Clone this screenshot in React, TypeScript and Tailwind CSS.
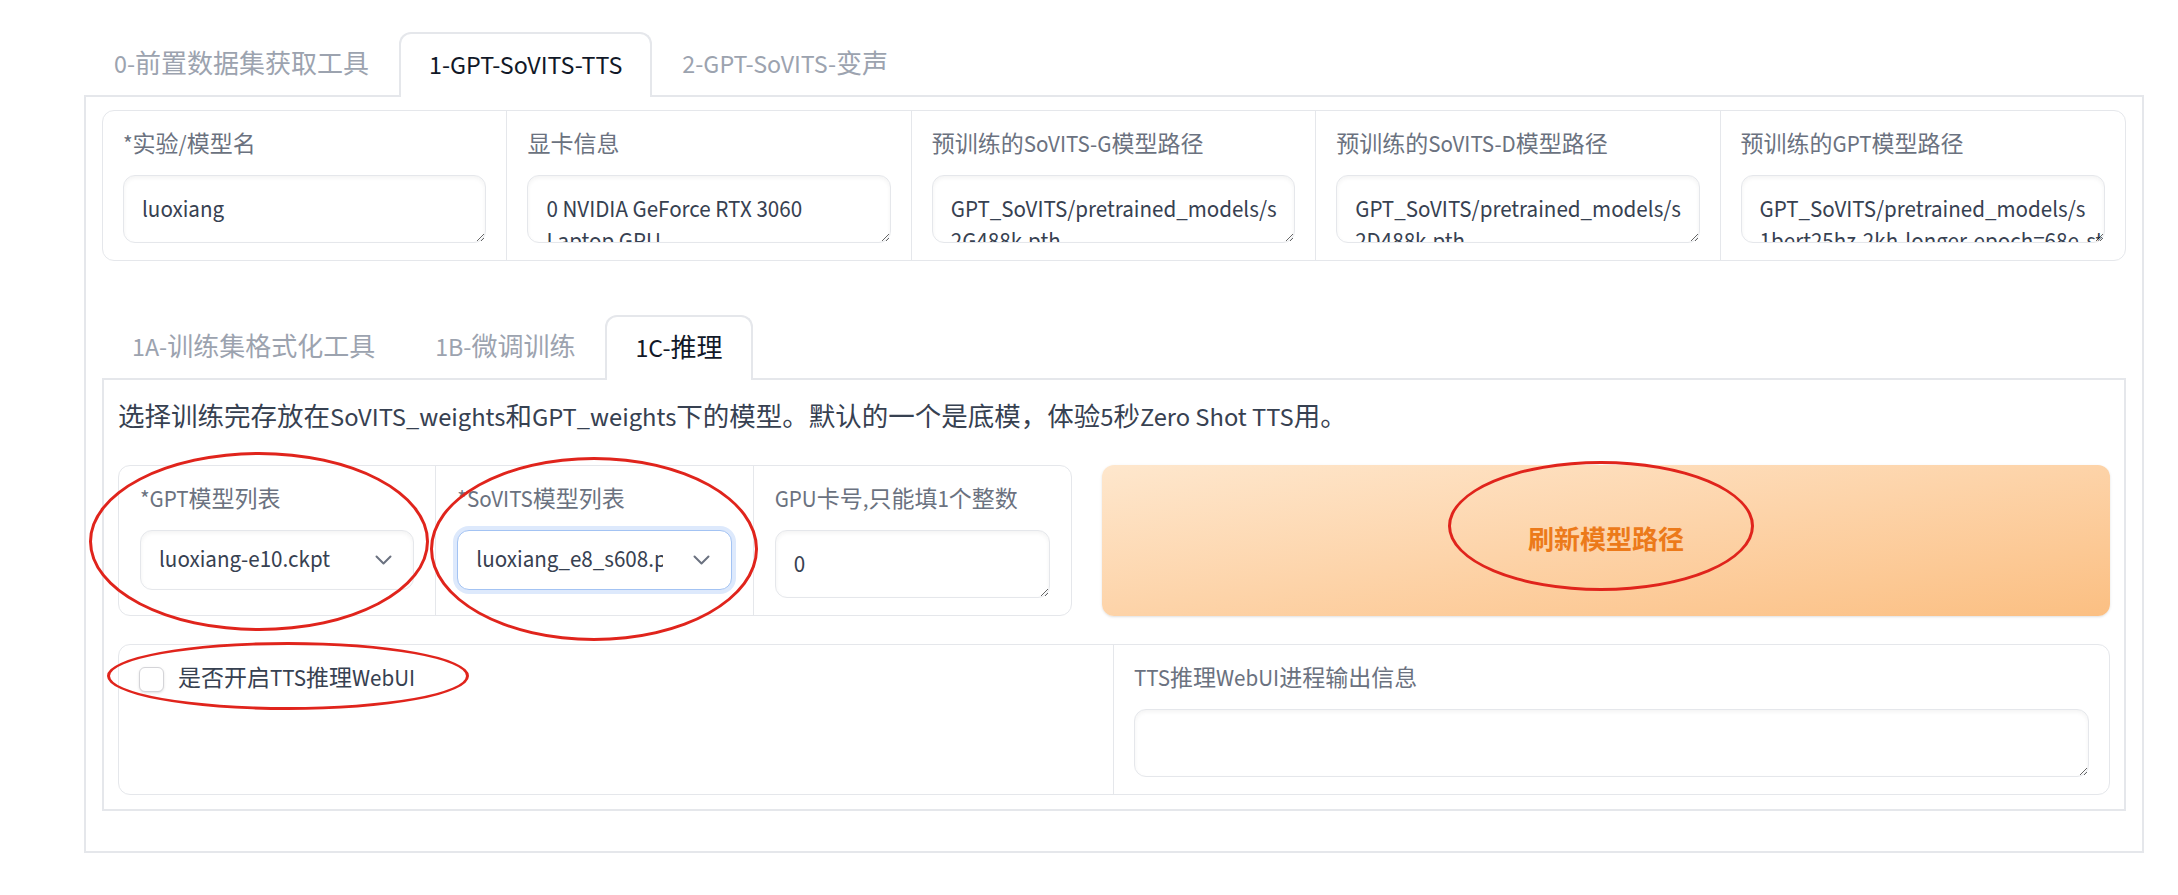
import React from "react";

const labelCls = "text-[23px] leading-7 text-[#6b7280]";
const areaCls =
  "mt-4 block h-[68px] w-full resize-y overflow-hidden whitespace-pre rounded-xl border border-[#e5e7eb] bg-white px-[18px] py-[18px] text-[23px] leading-8 text-[#374151] shadow-inner outline-none";

const topFields = [
  { title: "*实验/模型名", value: "luoxiang" },
  { title: "显卡信息", value: "0 NVIDIA GeForce RTX 3060\nLaptop GPU" },
  { title: "预训练的SoVITS-G模型路径", value: "GPT_SoVITS/pretrained_models/s\n2G488k.pth" },
  { title: "预训练的SoVITS-D模型路径", value: "GPT_SoVITS/pretrained_models/s\n2D488k.pth" },
  {
    title: "预训练的GPT模型路径",
    value: "GPT_SoVITS/pretrained_models/s\n1bert25hz-2kh-longer-epoch=68e-step=50232.ckpt",
  },
];

function TabBar({ tabs, active }: { tabs: string[]; active: string }) {
  return (
    <div className="flex h-[63px] items-start">
      {tabs.map((tab) =>
        tab === active ? (
          <div
            key={tab}
            className="relative z-10 flex h-[65px] items-center rounded-t-xl border-2 border-b-0 border-[#e5e7eb] bg-white px-[28px] text-[26px] text-[#111827]"
          >
            {tab}
          </div>
        ) : (
          <div key={tab} className="flex h-[63px] items-center px-[30px] pt-[2px] text-[26px] text-[#9ca3af]">
            {tab}
          </div>
        )
      )}
    </div>
  );
}

function Field({ title, value }: { title: string; value: string }) {
  return (
    <div className="px-5 pb-[17px] pt-5">
      <div className={labelCls}>{title}</div>
      <textarea readOnly wrap="off" rows={1} defaultValue={value} className={areaCls} />
    </div>
  );
}

function Chevron() {
  return (
    <svg width="17" height="10" viewBox="0 0 17 10" fill="none" stroke="#6b7280" strokeWidth="2" strokeLinecap="round" strokeLinejoin="round">
      <path d="M1.5 1.5 L8.5 8.5 L15.5 1.5" />
    </svg>
  );
}

function Dropdown({ title, value, focused }: { title: string; value: string; focused?: boolean }) {
  return (
    <div className="px-[21px] pt-5">
      <div className={labelCls}>{title}</div>
      <div
        className={`mt-4 flex h-[60px] items-center rounded-xl border bg-white pl-[18px] pr-[21px] ${
          focused ? "border-[#a3c3f3] ring-4 ring-[#dde9fc]" : "border-[#e5e7eb] shadow-inner"
        }`}
      >
        <span className="min-w-0 flex-1 overflow-hidden whitespace-nowrap text-[23px] text-[#374151]">{value}</span>
        <span className="ml-[30px] flex">
          <Chevron />
        </span>
      </div>
    </div>
  );
}

function Ellipse({ className }: { className: string }) {
  return <div className={`pointer-events-none absolute rounded-[50%] border-[3px] border-[#e0241c] ${className}`} />;
}

export default function App() {
  return (
    <div className="relative min-h-[895px] bg-white pt-8 font-['Source_Sans_3','Source_Sans_Pro','Noto_Sans_CJK_SC',sans-serif]">
      <div className="ml-[84px] w-[2060px]">
        <TabBar tabs={["0-前置数据集获取工具", "1-GPT-SoVITS-TTS", "2-GPT-SoVITS-变声"]} active="1-GPT-SoVITS-TTS" />

        <div className="border-2 border-[#e5e7eb] px-4 pb-10 pt-[13px]">
          <div className="grid grid-cols-5 divide-x divide-[#e5e7eb] rounded-xl border border-[#e5e7eb]">
            {topFields.map((f) => (
              <Field key={f.title} title={f.title} value={f.value} />
            ))}
          </div>

          <div className="mt-[54px]">
            <TabBar tabs={["1A-训练集格式化工具", "1B-微调训练", "1C-推理"]} active="1C-推理" />

            <div className="border-2 border-[#e5e7eb] px-[14px] pb-[14px] pt-5">
              <p className="text-[26.5px] leading-9 text-[#374151]">
                选择训练完存放在SoVITS_weights和GPT_weights下的模型。默认的一个是底模，体验5秒Zero Shot TTS用。
              </p>

              <div className="mt-[29px] flex gap-[30px]">
                <div className="grid w-[954px] grid-cols-3 divide-x divide-[#e5e7eb] rounded-xl border border-[#e5e7eb]">
                  <Dropdown title="*GPT模型列表" value="luoxiang-e10.ckpt" />
                  <Dropdown title="*SoVITS模型列表" value="luoxiang_e8_s608.pth" focused />
                  <div className="px-[21px] pb-[17px] pt-5">
                    <div className={labelCls}>GPU卡号,只能填1个整数</div>
                    <textarea readOnly wrap="off" rows={1} defaultValue="0" className={areaCls} />
                  </div>
                </div>

                <button
                  type="button"
                  className="flex-1 rounded-xl bg-gradient-to-br from-[#fee7cd] to-[#fbbf82] text-[26px] font-bold text-[#ec7a1a] shadow-sm"
                >
                  刷新模型路径
                </button>
              </div>

              <div className="mt-[28px] grid grid-cols-2 divide-x divide-[#e5e7eb] rounded-xl border border-[#e5e7eb]">
                <div className="px-5 pt-5">
                  <label className="flex items-center gap-[14px]">
                    <span className="block h-[25px] w-[25px] rounded-md border border-[#d4d4d8] bg-white shadow-sm" />
                    <span className="text-[23px] leading-7 text-[#374151]">是否开启TTS推理WebUI</span>
                  </label>
                </div>
                <Field title="TTS推理WebUI进程输出信息" value="" />
              </div>
            </div>
          </div>
        </div>
      </div>

      <Ellipse className="left-[89px] top-[452px] h-[179px] w-[340px]" />
      <Ellipse className="left-[430px] top-[457px] h-[184px] w-[328px]" />
      <Ellipse className="left-[1448px] top-[461px] h-[130px] w-[306px]" />
      <Ellipse className="left-[107px] top-[642px] h-[68px] w-[362px]" />
    </div>
  );
}
